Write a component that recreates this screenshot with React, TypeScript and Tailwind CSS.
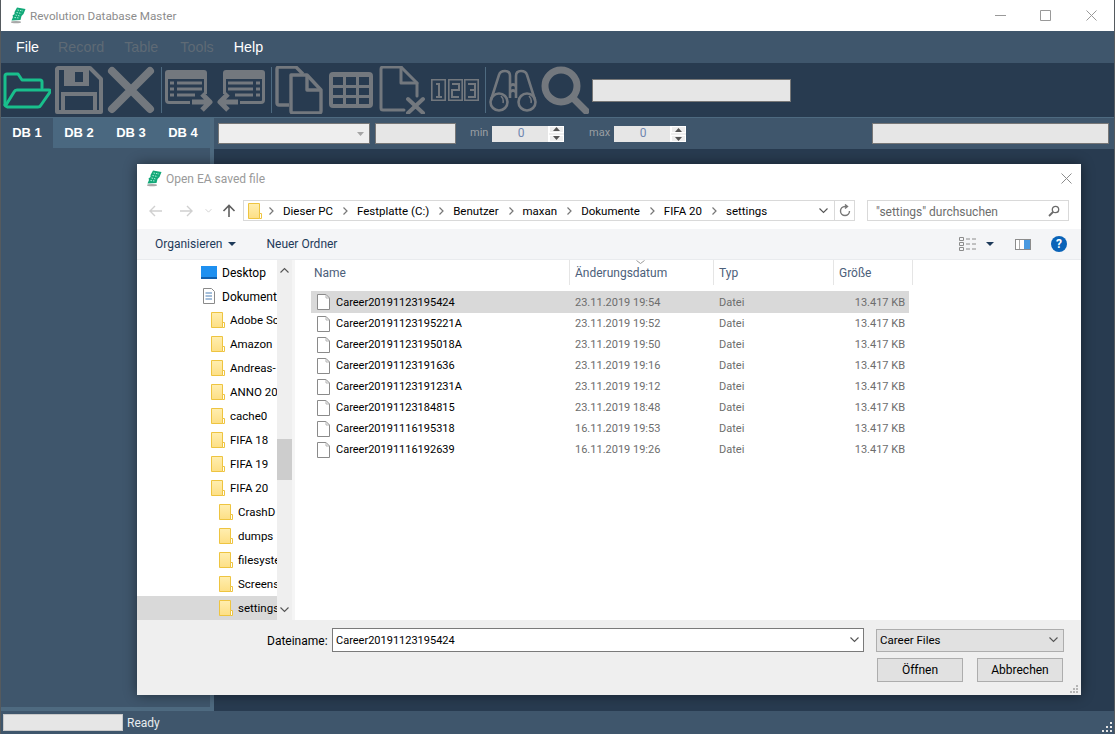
import React from 'react';

const IC = '#73787e';

const AppIcon = () => (
  <svg width="16" height="17" viewBox="0 0 16 17" className="shrink-0">
    <ellipse cx="6" cy="15.2" rx="5" ry="1.1" fill="#a8a8a8" />
    <path d="M7 0.5 L15.5 2 L13.5 7 L11.5 9 L10.5 13 L1.5 13.5 L3 10 L2.5 8.5 L4.5 7 L4.5 5 Z" fill="#12a878" />
    <path d="M7.5 3 L13 4 M6.5 5.5 L11.5 6.5 M5.5 8 L10 9 M4.5 10.5 L9 11" stroke="#a6f2d6" strokeWidth="1" strokeDasharray="1.5 1" />
  </svg>
);

const FolderOpen = () => (
  <svg width="48" height="48" viewBox="0 0 48 48" fill="none" stroke="#19bf8c" strokeWidth="3" strokeLinejoin="round" strokeLinecap="round">
    <path d="M2 39 V10 Q2 8 4 8 H15 L19 14 H37 Q39 14 39 16 V22" />
    <path d="M2 39 Q3 41 6 41 H35 Q37 41 38 39 L47 26 Q48 24 46 24 H14 Q12 24 11 26 L3 39" />
  </svg>
);

const Save = () => (
  <svg width="48" height="48" viewBox="0 0 48 48" fill="none">
    <path stroke={IC} strokeWidth="4" strokeLinejoin="round" d="M3 2 H35 L46 13 V46 H2 V3 Z" />
    <path fillRule="evenodd" fill={IC} d="M9 2 H34 V20 H9 Z M20 6 V16 H28 V6 Z" />
    <path stroke={IC} strokeWidth="4" d="M8 46 V28 H40 V46" />
  </svg>
);

const Cross = () => (
  <svg width="48" height="48" viewBox="0 0 48 48" fill="none" stroke={IC} strokeWidth="8" strokeLinecap="round">
    <path d="M5 5 L43 43 M43 5 L5 43" />
  </svg>
);

const RecordOut = () => (
  <svg width="48" height="48" viewBox="0 0 48 48" fill="none">
    <path fill={IC} d="M3 4 H39 Q42 4 42 7 V13 H0 V7 Q0 4 3 4 Z" />
    <path d="M1.5 12 V34 Q1.5 36.5 4 36.5 H25 M40.5 12 V28" stroke={IC} strokeWidth="3" />
    <path d="M5 17 H9 M12 17 H37 M5 23 H9 M12 23 H37 M5 29 H9 M12 29 H30" stroke={IC} strokeWidth="3" />
    <path d="M27 36 H44 M37 28 L45 36 L37 44" stroke={IC} strokeWidth="5" strokeLinejoin="round" />
  </svg>
);

const RecordIn = () => (
  <svg width="48" height="48" viewBox="0 0 48 48" fill="none">
    <path fill={IC} d="M9 4 H45 Q48 4 48 7 V13 H6 V7 Q6 4 9 4 Z" />
    <path d="M7.5 12 V28 M46.5 12 V34 Q46.5 36.5 44 36.5 H23" stroke={IC} strokeWidth="3" />
    <path d="M11 17 H36 M39 17 H43 M11 23 H36 M39 23 H43 M18 29 H36 M39 29 H43" stroke={IC} strokeWidth="3" />
    <path d="M21 36 H4 M11 28 L3 36 L11 44" stroke={IC} strokeWidth="5" strokeLinejoin="round" />
  </svg>
);

const Copy = () => (
  <svg width="48" height="48" viewBox="0 0 48 48" fill="none" stroke={IC} strokeWidth="3.4" strokeLinejoin="round">
    <path d="M14 39 H4 Q2 39 2 37 V3 Q2 1 4 1 H21 L28 8" />
    <path d="M16 9 H32 L46 24 V45 Q46 47 44 47 H18 Q16 47 16 45 Z" />
    <path d="M32 9 V24 H46" />
  </svg>
);

const TableIcon = () => (
  <svg width="48" height="48" viewBox="0 0 48 48" fill="none">
    <path fillRule="evenodd" fill={IC} d="M6 6 H42 Q46 6 46 10 V38 Q46 42 42 42 H6 Q2 42 2 38 V10 Q2 6 6 6 Z M6 11 V19 H16 V11 Z M19 11 V19 H29 V11 Z M32 11 V19 H42 V11 Z M6 22 V29 H16 V22 Z M19 22 V29 H29 V22 Z M32 22 V29 H42 V22 Z M6 32 V38 H16 V32 Z M19 32 V38 H29 V32 Z M32 32 V38 H42 V32 Z" />
  </svg>
);

const DocX = () => (
  <svg width="48" height="48" viewBox="0 0 48 48" fill="none" stroke={IC} strokeWidth="3" strokeLinejoin="round" strokeLinecap="round">
    <path d="M25 44 H4 Q2 44 2 42 V3 Q2 1 4 1 H22 L38 17 V30" />
    <path d="M22 1 V17 H38" />
    <path d="M29 33 L44 47 M44 33 L29 47" strokeWidth="4" />
  </svg>
);

const Nums = () => (
  <svg width="48" height="48" viewBox="0 0 48 48" fill="none" stroke={IC} strokeWidth="1.6">
    <path d="M0.8 13.8 H14.2 V34.2 H0.8 Z M17.8 13.8 H31.2 V34.2 H17.8 Z M33.8 13.8 H47.2 V34.2 H33.8 Z" />
    <path strokeWidth="2" d="M5 18 H8 V31 M5 31 H11 M21 18 H28 V24 H21 V31 H28 M37 18 H44 V31 H37 M39 24 H44" />
  </svg>
);

const Binoculars = () => (
  <svg width="48" height="48" viewBox="0 0 48 48" fill="none" stroke={IC} strokeWidth="2.6">
    <circle cx="10" cy="36" r="8.5" />
    <circle cx="38" cy="36" r="8.5" />
    <path d="M2 34 L10 9 Q11 5 16 5 Q21 5 21 10 V32 M46 34 L38 9 Q37 5 32 5 Q27 5 27 10 V32" />
    <path d="M21 20 Q24 17 27 20 M21 26 Q24 23 27 26" />
    <path d="M12 30 Q15 33 14 37 M40 30 Q43 33 42 37" strokeWidth="1.6" />
  </svg>
);

const Magnifier = () => (
  <svg width="48" height="48" viewBox="0 0 48 48" fill="none" stroke={IC} strokeLinecap="round">
    <circle cx="20" cy="20" r="16" strokeWidth="7" />
    <path d="M32 32 L45 45" strokeWidth="7" />
  </svg>
);

const Sep = () => <div className="mr-[-1px] h-[46px] w-[3px] border-r border-[#4e6a80]" />;

const Spin = ({ className }: { className: string }) => (
  <div className={`flex h-[16px] w-[72px] shrink-0 bg-[#e6e6e6] ${className}`}>
    <div className="flex-1 pl-[2px] text-center text-[12px] leading-[15px] text-[#6f86b0]">0</div>
    <div className="flex w-[16px] flex-col justify-between border-l border-white bg-[#eeeeee]">
      <div className="flex h-[7px] items-center justify-center border border-white text-[0px]">
        <svg width="7" height="4"><path d="M3.5 0 L7 4 H0 Z" fill="#555" /></svg>
      </div>
      <div className="flex h-[7px] items-center justify-center border border-white">
        <svg width="7" height="4"><path d="M0 0 H7 L3.5 4 Z" fill="#555" /></svg>
      </div>
    </div>
  </div>
);

const YellowFolder = () => (
  <svg width="14" height="16" viewBox="0 0 14 16" className="shrink-0">
    <defs>
      <linearGradient id="fg" x1="0" y1="0" x2="0" y2="1">
        <stop offset="0" stopColor="#ffeeb0" />
        <stop offset="1" stopColor="#fddf85" />
      </linearGradient>
    </defs>
    <path d="M0.5 0.5 H11.5 V15.5 H0.5 Z" fill="url(#fg)" stroke="#eec440" />
    <path d="M11.5 10.5 H13.5 V15.5 H11.5 Z" fill="#fff" stroke="#eec440" />
  </svg>
);

const FileIcon = () => (
  <svg width="13" height="16" viewBox="0 0 13 16" className="shrink-0">
    <path d="M0.5 0.5 H9 L12.5 4 V15.5 H0.5 Z" fill="#fff" stroke="#8a8a8a" />
    <path d="M9 0.5 V4 H12.5" fill="none" stroke="#b5b5b5" />
  </svg>
);

const Chevron = ({ className = '' }: { className?: string }) => (
  <svg width="9" height="6" viewBox="0 0 9 6" className={className}>
    <path d="M0.5 0.5 L4.5 4.5 L8.5 0.5" fill="none" stroke="#555" strokeWidth="1.1" />
  </svg>
);

const crumbs = ['Dieser PC', 'Festplatte (C:)', 'Benutzer', 'maxan', 'Dokumente', 'FIFA 20', 'settings'];

const tree = [
  { name: 'Adobe Sc', pad: 'pl-[74px]' },
  { name: 'Amazon', pad: 'pl-[74px]' },
  { name: 'Andreas-', pad: 'pl-[74px]' },
  { name: 'ANNO 20', pad: 'pl-[74px]' },
  { name: 'cache0', pad: 'pl-[74px]' },
  { name: 'FIFA 18', pad: 'pl-[74px]' },
  { name: 'FIFA 19', pad: 'pl-[74px]' },
  { name: 'FIFA 20', pad: 'pl-[74px]' },
  { name: 'CrashD', pad: 'pl-[82px]' },
  { name: 'dumps', pad: 'pl-[82px]' },
  { name: 'filesyste', pad: 'pl-[82px]' },
  { name: 'Screens', pad: 'pl-[82px]' },
  { name: 'settings', pad: 'pl-[82px]' },
];

const files = [
  { name: 'Career20191123195424', date: '23.11.2019 19:54' },
  { name: 'Career20191123195221A', date: '23.11.2019 19:52' },
  { name: 'Career20191123195018A', date: '23.11.2019 19:50' },
  { name: 'Career20191123191636', date: '23.11.2019 19:16' },
  { name: 'Career20191123191231A', date: '23.11.2019 19:12' },
  { name: 'Career20191123184815', date: '23.11.2019 18:48' },
  { name: 'Career20191116195318', date: '16.11.2019 19:53' },
  { name: 'Career20191116192639', date: '16.11.2019 19:26' },
];

const Dialog = () => (
  <div className="absolute left-[136px] top-[164px] flex h-[531px] w-[944px] flex-col bg-white text-[12px] text-black shadow-[0_0_12px_rgba(0,0,0,0.45)]">
    <div className="flex h-[28px] shrink-0 items-center pl-[9px] pr-[9px]">
      <AppIcon />
      <span className="ml-[4px] mt-[2px] text-[#9a9a9a]">Open EA saved file</span>
      <svg width="11" height="11" viewBox="0 0 11 11" className="ml-auto">
        <path d="M0.5 0.5 L10.5 10.5 M10.5 0.5 L0.5 10.5" stroke="#8c8c8c" />
      </svg>
    </div>

    <div className="flex h-[37px] shrink-0 items-start pt-[8px]">
      <div className="flex h-[21px] w-[106px] shrink-0 items-center pl-[12px]">
        <svg width="14" height="12" viewBox="0 0 14 12" fill="none" stroke="#d0d0d0" strokeWidth="1.4"><path d="M13 6 H1 M6 1 L1 6 L6 11" /></svg>
        <svg width="14" height="12" viewBox="0 0 14 12" fill="none" stroke="#d0d0d0" strokeWidth="1.4" className="ml-[16px]"><path d="M1 6 H13 M8 1 L13 6 L8 11" /></svg>
        <Chevron className="ml-[11px] scale-75 opacity-30" />
        <svg width="14" height="14" viewBox="0 0 14 14" fill="none" stroke="#5f5f5f" strokeWidth="1.6" className="ml-[9px]"><path d="M7 13 V1.5 M1.5 7 L7 1.5 L12.5 7" /></svg>
      </div>
      <div className="flex h-[21px] w-[612px] shrink-0 items-center border border-[#d9d9d9] pl-[4px] text-[11.5px]">
        <div className="mr-[-3px] flex shrink-0"><YellowFolder /></div>
        {crumbs.map((c) => (
          <React.Fragment key={c}>
            <svg width="5" height="8" viewBox="0 0 5 8" className="ml-[10px] mr-[9px] shrink-0" fill="none" stroke="#777" strokeWidth="1.2"><path d="M0.5 0.5 L4 4 L0.5 7.5" /></svg>
            <span className="mt-[2px] whitespace-nowrap">{c}</span>
          </React.Fragment>
        ))}
        <Chevron className="ml-auto mr-[6px]" />
        <div className="flex h-full w-[20px] items-center justify-center border-l border-[#d9d9d9]">
          <svg width="12" height="13" viewBox="0 0 12 13" fill="none" stroke="#777" strokeWidth="1.4"><path d="M10.5 7 A4.5 4.5 0 1 1 6 2.5 H8 M6 0.5 L8.5 2.5 L6 4.5" /></svg>
        </div>
      </div>
      <div className="ml-[12px] flex h-[21px] w-[202px] shrink-0 items-center justify-between border border-[#d9d9d9] pl-[8px] pr-[8px] text-[#6d6d6d]">
        <span className="mt-[2px]">"settings" durchsuchen</span>
        <svg width="12" height="12" viewBox="0 0 12 12" fill="none" stroke="#6b6b6b"><circle cx="7.5" cy="4.5" r="3.2" strokeWidth="1.3" /><path d="M5 7 L1 11" strokeWidth="1.8" /></svg>
      </div>
    </div>

    <div className="flex h-[31px] shrink-0 items-center border-b border-[#e9ebee] bg-[#f4f5f7] pl-[18px] pr-[14px] text-[#1e3a5a]">
      <span>Organisieren</span>
      <svg width="8" height="4" className="ml-[6px]"><path d="M0 0 H8 L4 4 Z" fill="#1e3a5a" /></svg>
      <span className="ml-[30px]">Neuer Ordner</span>
      <svg width="18" height="14" viewBox="0 0 18 14" className="ml-auto" fill="none" stroke="#8c8c8c">
        <path d="M0.5 0.5 H4.5 V3.5 H0.5 Z M0.5 5.5 H4.5 V8.5 H0.5 Z M0.5 10.5 H4.5 V13.5 H0.5 Z M7 2 H11 M13 2 H17 M7 7 H11 M13 7 H17 M7 12 H11 M13 12 H17" />
      </svg>
      <svg width="8" height="4" className="ml-[9px]"><path d="M0 0 H8 L4 4 Z" fill="#1e3a5a" /></svg>
      <div className="ml-[21px] flex h-[11px] w-[16px] border border-[#8c8c8c] bg-white">
        <div className="w-[4px] border-r border-[#aaa]" />
        <div className="ml-auto w-[6px] bg-[#4a9ae0]" />
      </div>
      <div className="ml-[20px] flex h-[16px] w-[16px] items-center justify-center rounded-full bg-[#0a63b8] text-[12px] font-bold text-white">?</div>
    </div>

    <div className="flex min-h-0 flex-1">
      <div className="flex w-[155px] shrink-0 overflow-hidden">
        <div className="w-[140px] shrink-0 overflow-hidden">
          <div className="flex h-[24px] items-center whitespace-nowrap pl-[64px]">
            <svg width="16" height="13" viewBox="0 0 16 13" className="shrink-0">
              <rect width="16" height="12" fill="#1e90f0" />
              <rect y="11" width="16" height="2" fill="#0f5fae" />
            </svg>
            <span className="ml-[5px] mt-[1px]">Desktop</span>
          </div>
          <div className="flex h-[24px] items-center whitespace-nowrap pl-[66px]">
            <svg width="12" height="16" viewBox="0 0 12 16" className="shrink-0" fill="none">
              <path d="M0.5 0.5 H8.5 L11.5 3.5 V15.5 H0.5 Z" fill="#fff" stroke="#8a8a8a" />
              <path d="M2.5 5 H9 M2.5 8 H9 M2.5 11 H9" stroke="#4a7fb5" />
            </svg>
            <span className="ml-[7px] mt-[1px]">Dokument</span>
          </div>
          {tree.map((t) => (
            <div key={t.name} className={`flex h-[24px] items-center whitespace-nowrap text-[11.5px] ${t.pad} ${t.name === 'settings' ? 'bg-[#d9d9d9]' : ''}`}>
              <YellowFolder />
              <span className="ml-[5px] mt-[2px]">{t.name}</span>
            </div>
          ))}
        </div>
        <div className="flex w-[15px] shrink-0 flex-col bg-[#efefef]">
          <div className="flex h-[20px] items-center justify-center">
            <Chevron className="rotate-180" />
          </div>
          <div className="mt-[159px] h-[41px] bg-[#cdcdcd]" />
          <div className="mt-auto flex h-[20px] items-center justify-center">
            <Chevron />
          </div>
        </div>
      </div>
      <div className="w-[3px] shrink-0 bg-[#f5f5f5]" />

      <div className="min-w-0 flex-1 pl-[16px]">
        <div className="flex h-[25px] text-[#4c607a]">
          <div className="relative flex w-[258px] items-center pl-[3px]">Name</div>
          <div className="relative flex w-[144px] items-center border-l border-[#e5e5e5] pl-[5px]">
            Änderungsdatum
            <svg width="9" height="4" className="absolute left-[66px] top-0" fill="none" stroke="#999"><path d="M0.5 0.5 L4.5 3.5 L8.5 0.5" /></svg>
          </div>
          <div className="flex w-[120px] items-center border-l border-[#e5e5e5] pl-[5px]">Typ</div>
          <div className="flex w-[80px] items-center border-x border-[#e5e5e5] pl-[5px]">Größe</div>
        </div>
        <div className="mt-[6px] w-[598px] text-[11px]">
          {files.map((f, i) => (
            <div key={f.name} className={`flex items-center ${i === 0 ? 'h-[22px] bg-[#d9d9d9]' : 'h-[21px]'}`}>
              <div className="flex w-[258px] items-center pl-[6px]">
                <FileIcon />
                <span className="ml-[6px] mt-[2px]">{f.name}</span>
              </div>
              <div className="mt-[2px] w-[144px] pl-[6px] text-[#6d6d6d]">{f.date}</div>
              <div className="mt-[2px] w-[110px] pl-[6px] text-[#6d6d6d]">Datei</div>
              <div className="mt-[2px] flex-1 pr-[4px] text-right text-[#6d6d6d]">13.417 KB</div>
            </div>
          ))}
        </div>
      </div>
    </div>

    <div className="relative flex h-[75px] shrink-0 flex-col bg-[#efefef] pl-[130px] pr-[18px] pt-[8px]">
      <div className="flex items-center">
        <span className="mt-[2px] w-[65px] shrink-0">Dateiname:</span>
        <div className="flex h-[24px] w-[532px] shrink-0 items-center border border-[#7a7a7a] bg-white pl-[3px] pr-[4px]">
          <span className="mt-[2px] text-[11px]">Career20191123195424</span>
          <Chevron className="ml-auto" />
        </div>
        <div className="ml-[12px] flex h-[23px] w-[188px] shrink-0 items-center border border-[#adadad] bg-[#e1e1e1] pl-[3px] pr-[5px]">
          <span className="mt-[2px] text-[11.5px]">Career Files</span>
          <Chevron className="ml-auto" />
        </div>
      </div>
      <div className="mt-[6px] flex justify-end gap-[14px]">
        <div className="flex h-[24px] w-[86px] items-center justify-center border border-[#adadad] bg-[#e1e1e1]">Öffnen</div>
        <div className="flex h-[24px] w-[86px] items-center justify-center border border-[#adadad] bg-[#e1e1e1]">Abbrechen</div>
      </div>
      <svg width="9" height="9" viewBox="0 0 9 9" className="absolute bottom-[1px] right-[2px]" fill="#b5b5b5">
        <path d="M6 0 H8 V2 H6 Z M3 3 H5 V5 H3 Z M6 3 H8 V5 H6 Z M0 6 H2 V8 H0 Z M3 6 H5 V8 H3 Z M6 6 H8 V8 H6 Z" />
      </svg>
    </div>
  </div>
);

export default function App() {
  return (
    <div className="relative flex h-[734px] w-[1115px] flex-col overflow-hidden border-x border-[#555a5e] bg-[#283b50] font-['Roboto',sans-serif]">
      <div className="flex h-[31px] shrink-0 items-center bg-white pl-[9px] text-[11.7px]">
        <AppIcon />
        <span className="ml-[4px] mt-[2px] text-[#8c8c8c]">Revolution Database Master</span>
        <div className="ml-auto flex items-center pr-[17px]">
          <svg width="11" height="11" viewBox="0 0 11 11"><path d="M0 5.5 H11" stroke="#999" /></svg>
          <svg width="11" height="11" viewBox="0 0 11 11" className="ml-[34px]"><path d="M0.5 0.5 H10.5 V10.5 H0.5 Z" fill="none" stroke="#999" /></svg>
          <svg width="11" height="11" viewBox="0 0 11 11" className="ml-[35px]"><path d="M0.5 0.5 L10.5 10.5 M10.5 0.5 L0.5 10.5" stroke="#999" /></svg>
        </div>
      </div>

      <div className="flex h-[32px] shrink-0 items-center bg-[#3f566c] pl-[15px] pt-[2px] font-['Liberation_Sans',sans-serif] text-[14.3px]">
        <span className="text-white">File</span>
        <span className="ml-[19px] text-[#5e6a75]">Record</span>
        <span className="ml-[20px] text-[#5e6a75]">Table</span>
        <span className="ml-[22px] text-[#5e6a75]">Tools</span>
        <span className="ml-[20px] text-white">Help</span>
      </div>

      <div className="flex h-[55px] shrink-0 items-center gap-[4px] border-b border-[#4e6a80] pl-[2px]">
        <FolderOpen />
        <Save />
        <Cross />
        <Sep />
        <RecordOut />
        <RecordIn />
        <Sep />
        <Copy />
        <TableIcon />
        <DocX />
        <Nums />
        <Sep />
        <Binoculars />
        <Magnifier />
        <div className="ml-[-1px] h-[23px] w-[199px] border border-[#777] bg-[#e6e6e6]" />
      </div>

      <div className="flex min-h-0 flex-1">
        <div className="flex w-[213px] shrink-0 flex-col border-b-4 border-r-4 border-[#4e6a80]">
          <div className="flex h-[30px] shrink-0 bg-[#4a6880] font-['Liberation_Sans',sans-serif] text-[13px] font-bold text-white">
            <div className="flex w-[52px] items-center justify-center bg-[#3f566c]">DB 1</div>
            <div className="flex w-[52px] items-center justify-center">DB 2</div>
            <div className="flex w-[52px] items-center justify-center">DB 3</div>
            <div className="flex w-[52px] items-center justify-center">DB 4</div>
          </div>
          <div className="flex-1 bg-[#3f566c]" />
        </div>
        <div className="min-w-0 flex-1">
          <div className="flex h-[31px] items-center bg-[#3f566c] pl-[4px] text-[11px] text-[#9a9fa3]">
            <div className="flex h-[21px] w-[152px] shrink-0 items-center justify-end border border-[#777] bg-[#eeeeee] pr-[5px]">
              <svg width="7" height="4"><path d="M0 0 H7 L3.5 4 Z" fill="#a5a5a5" /></svg>
            </div>
            <div className="ml-[5px] h-[21px] w-[81px] shrink-0 border border-[#777] bg-[#e6e6e6]" />
            <span className="ml-[14px] w-[22px] shrink-0">min</span>
            <Spin className="" />
            <span className="ml-[25px] w-[25px] shrink-0">max</span>
            <Spin className="mt-[1px]" />
            <div className="ml-[186px] h-[21px] w-[237px] shrink-0 border border-[#777] bg-[#e6e6e6]" />
          </div>
        </div>
      </div>

      <div className="relative flex h-[23px] shrink-0 items-center bg-[#3f566c] pl-[2px] text-[12px] text-[#e8ecef]">
        <div className="h-[17px] w-[120px] border border-[#c8c8c8] bg-[#e6e6e6]" />
        <span className="ml-[4px]">Ready</span>
        <svg width="11" height="11" viewBox="0 0 11 11" className="absolute bottom-[1px] right-[1px]" fill="#e6e6e6">
          <path d="M8 0 H10 V2 H8 Z M4 4 H6 V6 H4 Z M8 4 H10 V6 H8 Z M0 8 H2 V10 H0 Z M4 8 H6 V10 H4 Z M8 8 H10 V10 H8 Z" />
        </svg>
      </div>

      <Dialog />
    </div>
  );
}
